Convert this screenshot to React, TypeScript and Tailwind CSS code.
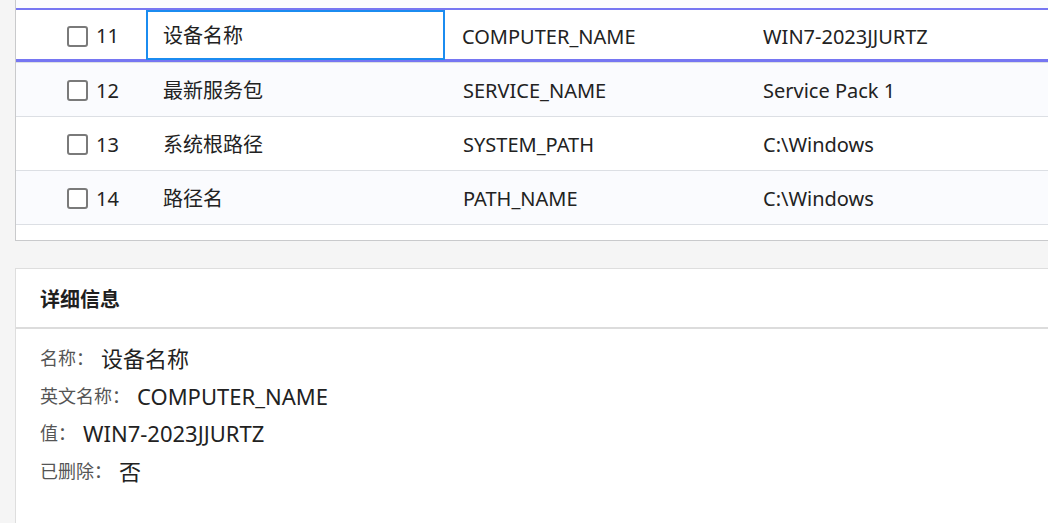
import React from 'react'

const rows = [
  { no: 11, name: '设备名称', en: 'COMPUTER_NAME', value: 'WIN7-2023JJURTZ', selected: true },
  { no: 12, name: '最新服务包', en: 'SERVICE_NAME', value: 'Service Pack 1' },
  { no: 13, name: '系统根路径', en: 'SYSTEM_PATH', value: 'C:\\Windows' },
  { no: 14, name: '路径名', en: 'PATH_NAME', value: 'C:\\Windows' },
]

const details = [
  { label: '名称：', value: '设备名称' },
  { label: '英文名称：', value: 'COMPUTER_NAME' },
  { label: '值：', value: 'WIN7-2023JJURTZ' },
  { label: '已删除：', value: '否' },
]

function Checkbox() {
  return <span className="inline-block w-[21px] h-[21px] rounded-[3px] border-2 border-[#7a7a7a] bg-white shrink-0" />
}

export default function App() {
  return (
    <div
      className="w-[1048px] h-[523px] overflow-hidden bg-[#f5f5f5] text-[#222] pl-[15px]"
      style={{ fontFamily: '"Noto Sans", "Noto Sans CJK SC", sans-serif' }}
    >
      {/* table panel */}
      <div className="bg-white border-l border-b border-[#c9cacc] pb-[15px]">
        <div className="h-[8px] bg-[#fafbfe]" />
        {rows.map((r, i) => (
          <div
            key={r.no}
            className={
              'flex items-center border-b border-[#dcdfe4] text-[20px] ' +
              (r.selected
                ? 'h-[55px] bg-white shadow-[inset_0_2px_0_#7676f2,inset_0_-3px_0_#7676f2]'
                : i % 2 === 1
                  ? 'h-[54px] bg-[#fafbfe] pt-[2px]'
                  : 'h-[54px] bg-white pt-[2px]')
            }
          >
            <div className={'w-[130px] flex items-center pl-[51px] gap-[8px] leading-none ' + (r.selected ? 'pt-[2px]' : '')}>
              <Checkbox />
              <span>{r.no}</span>
            </div>
            {r.selected ? (
              <div className="w-[299px] h-[50px] mt-[-1px] border-2 border-[#1b8cf0] flex items-center pl-[15px] pt-[3px]">
                {r.name}
              </div>
            ) : (
              <div className="w-[300px] pl-[17px]">{r.name}</div>
            )}
            <div className={(r.selected ? 'w-[301px] pt-[3px] ' : 'w-[300px] ') + 'pl-[17px]'}>{r.en}</div>
            <div className={'flex-1 pl-[17px] ' + (r.selected ? 'pt-[3px]' : '')}>{r.value}</div>
          </div>
        ))}
      </div>

      {/* detail panel */}
      <div className="mt-[27px] bg-white border-l border-t border-[#dedede] h-[260px]">
        <div className="h-[60px] flex items-center px-[24px] pt-[4px] border-b-2 border-[#dcdcdc] text-[20px] font-bold text-[#1f1f1f]">
          详细信息
        </div>
        <div className="px-[24px] pt-[11px] flex flex-col">
          {details.map(d => (
            <div key={d.label} className="h-[37.5px] flex items-center">
              <span className="text-[18px] text-[#555]">{d.label}</span>
              <span className="text-[22px] text-[#222] ml-[7px]">{d.value}</span>
            </div>
          ))}
        </div>
      </div>
    </div>
  )
}
